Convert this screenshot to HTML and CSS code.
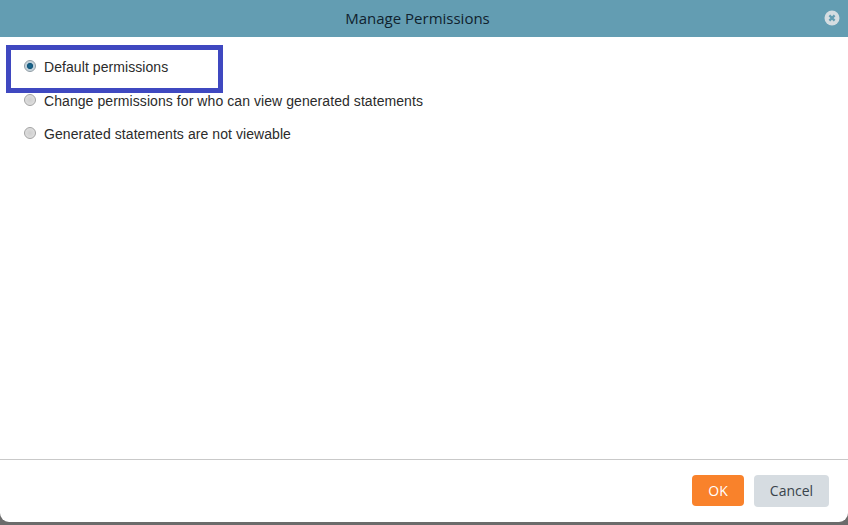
FILE: index.html
```html
<!DOCTYPE html>
<html lang="en">
<head>
<meta charset="utf-8">
<title>Manage Permissions</title>
<link rel="stylesheet" href="styles.css">
</head>
<body>
<div class="modal">
  <header class="modal-header">
    <h1 class="modal-title">Manage Permissions</h1>
    <button class="close" aria-label="Close">
      <svg width="16" height="16" viewBox="0 0 16 16"><circle cx="8" cy="8" r="7.5" fill="#d5dde1"/><path d="M5.4 5.4l5.2 5.2M10.6 5.4l-5.2 5.2" stroke="#639db2" stroke-width="2.2" fill="none"/></svg>
    </button>
  </header>
  <main class="modal-body">
    <label class="option"><span class="radio radio-on"></span>Default permissions</label>
    <label class="option"><span class="radio"></span>Change permissions for who can view generated statements</label>
    <label class="option"><span class="radio"></span>Generated statements are not viewable</label>
  </main>
  <footer class="modal-footer">
    <button class="btn btn-ok">OK</button>
    <button class="btn btn-cancel">Cancel</button>
  </footer>
  <div class="highlight"></div>
</div>
</body>
</html>
```
FILE: styles.css
```css
* { box-sizing: border-box; }
html, body { margin: 0; height: 100%; }
body { background: #6b6b6b; overflow: hidden; }
.modal {
  position: relative;
  width: 848px;
  height: 522px;
  display: flex;
  flex-direction: column;
  background: #fff;
  border-radius: 0 0 9px 9px;
  overflow: hidden;
}
.modal-header {
  height: 37px;
  flex: none;
  display: flex;
  align-items: center;
  justify-content: center;
  padding-right: 13px;
  position: relative;
  background: #639db2;
}
.modal-title {
  margin: 0;
  font: 400 15px/1 "Open Sans", sans-serif;
  color: #10222e;
}
.close {
  position: absolute;
  top: 10px;
  right: 8px;
  padding: 0;
  border: 0;
  background: none;
  width: 16px;
  height: 16px;
  display: block;
}
.close svg { display: block; }
.modal-body {
  flex: 1;
  padding: 21px 24px 0;
  display: flex;
  flex-direction: column;
  gap: 15.5px;
}
.option {
  display: flex;
  align-items: center;
  height: 18px;
  font: 14px/18px "Liberation Sans", Arial, sans-serif;
  letter-spacing: 0.07px;
  color: #2b2b2b;
  white-space: nowrap;
}
.radio {
  flex: none;
  width: 12px;
  height: 12px;
  margin-right: 8px;
  margin-top: -2px;
  border-radius: 50%;
  border: 1px solid #a2a2a2;
  background: radial-gradient(circle at 50% 50%, #cfcfcf 0, #dadada 55%, #ececec 100%);
}
.radio-on {
  border-color: #8f9ba3;
  background: radial-gradient(circle at 50% 50%, #1b6d94 0, #15577c 38%, #b9cbd6 50%, #eef2f4 100%);
}
.modal-footer {
  height: 63px;
  flex: none;
  border-top: 1px solid #c9c9c9;
  padding: 15px 19px 0 0;
  display: flex;
  justify-content: flex-end;
  align-items: flex-start;
  gap: 10px;
}
.btn {
  border: 0;
  border-radius: 4px;
  font: 400 14px/1 "Open Sans", sans-serif;
  padding: 0;
}
.btn-ok { width: 52px; height: 31px; background: #f9822b; color: #fff; }
.btn-cancel { width: 75px; height: 32px; background: #d6dce1; color: #39434b; }
.highlight {
  position: absolute;
  left: 6px;
  top: 45px;
  width: 217px;
  height: 48px;
  border: 5px solid #3f48c0;
}
```
